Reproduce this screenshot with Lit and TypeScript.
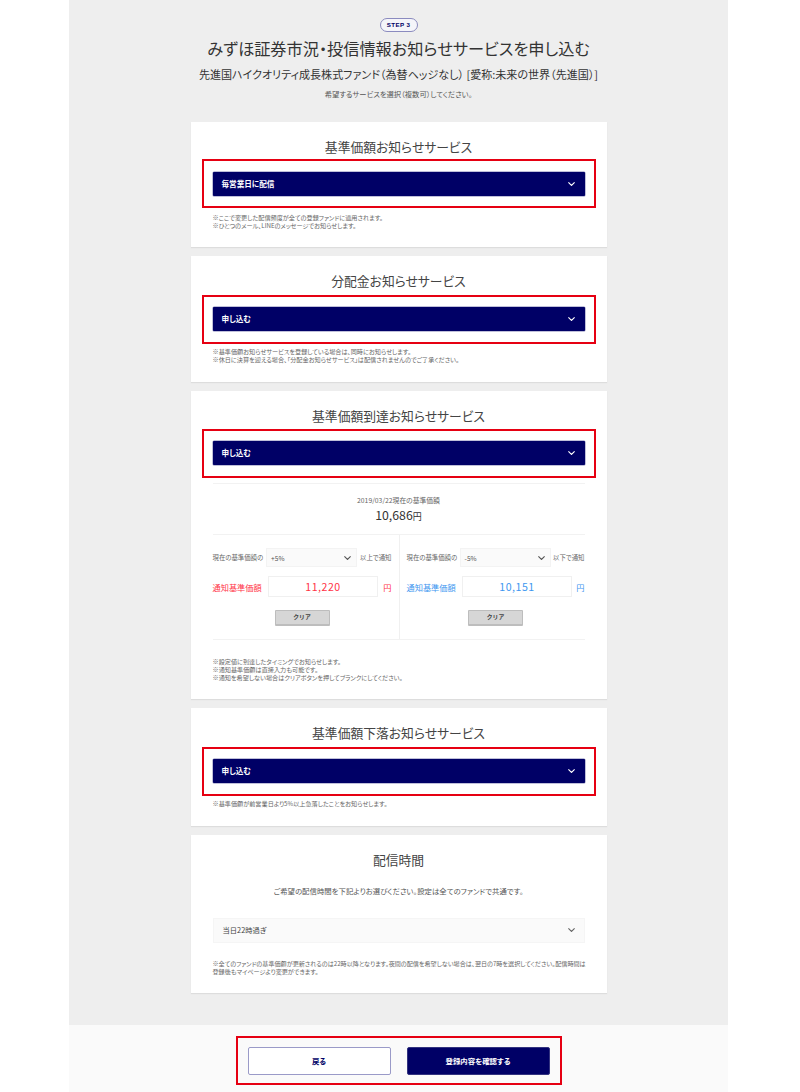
import { LitElement, html, css } from "lit";
import { customElement } from "lit/decorators.js";

const chev = () => html`<svg viewBox="0 0 7 4" width="7" height="4" fill="none" stroke="currentColor" stroke-width="1.15"><path d="M.4.4 3.5 3.4 6.6.4"/></svg>`;

@customElement("app-root")
export class AppRoot extends LitElement {
  static styles = css`
    :host { display: block; width: 800px; font-family: "Noto Sans CJK JP", "Noto Sans", sans-serif; color: #444; background: #fff; font-feature-settings: "palt"; }
    .page { width: 659px; margin-left: 69px; background: #eeeeee; height: 1092px; display: flex; flex-direction: column; }
    .main { flex: 1; display: flex; flex-direction: column; align-items: center; padding-top: 18px; }
    .step { width: 38px; height: 14px; box-sizing: border-box; border: 1px solid #8b8bbf; border-radius: 7px; background: #f5f5fa; color: #000066; font: 700 6.2px/12px "Liberation Sans", sans-serif; letter-spacing: .4px; text-align: center; }
    h1 { margin: 5px 0 0; font-size: 16.2px; line-height: 22px; font-weight: 400; color: #333; white-space: nowrap; }
    .sub { margin-top: 7px; font-size: 11.05px; line-height: 16px; color: #333; white-space: nowrap; }
    .lead { margin-top: 7px; font-size: 7.3px; line-height: 10px; color: #555; }
    .card { width: 416px; box-sizing: border-box; background: #fff; box-shadow: 0 1px 1px #ddd; padding: 15px 22px 0; margin-bottom: 9px; }
    .first { margin-top: 23px; }
    h2 { margin: 0; text-align: center; font-size: 12.8px; line-height: 19px; font-weight: 400; color: #444; }
    .red { margin: 5px -11px 0; border: 2px solid #e60012; padding: 10px 9px 11px; height: 49px; box-sizing: border-box; }
    .sel { height: 24px; box-sizing: border-box; border-radius: 1px; background: #000066; box-shadow: 0 0 0 .5px #8080b3; color: #fff; display: flex; align-items: center; justify-content: space-between; padding: 0 10px 1px 9px; font-size: 7.6px; font-weight: 700; }
    .note { font-size: 6.15px; line-height: 7.8px; color: #666; margin: 0; white-space: nowrap; }
    .c1 { height: 125px; }
    .c1 .red { margin-top: 3px; padding-top: 11px; padding-bottom: 10px; }
    .c1 .note { margin-top: 6px; }
    .c2 .note { margin-top: 4px; }
    .c2 { height: 126px; }
    .c3 { height: 308px; }
    .c3 .red { margin-top: 4px; }
    .c4 { height: 118px; }
    .c4 .note { margin-top: 4px; }
    .c5 { height: 158px; }
    .rule { border-top: 1px solid #f2f2f2; margin-top: 5px; }
    .cur { text-align: center; margin-top: 12px; font-size: 6.8px; line-height: 9px; height: 9px; color: #666; }
    .price { text-align: center; font-size: 12.3px; line-height: 18px; height: 18px; color: #333; margin-top: 1px; }
    .price small { font-size: 9px; }
    .alerts { display: grid; grid-template-columns: 1fr 1fr; border-top: 1px solid #f2f2f2; border-bottom: 1px solid #f2f2f2; margin-top: 10px; height: 106px; box-sizing: border-box; }
    .alert { padding-top: 13px; }
    .alert + .alert { border-left: 1px solid #f0f0f0; padding-left: 7px; }
    .alert:first-child { padding-right: 7px; }
    .r1 { display: flex; align-items: center; justify-content: space-between; font-size: 6.4px; color: #666; white-space: nowrap; }
    .mini { width: 91px; height: 19px; box-sizing: border-box; background: #fafafa; border: 1px solid #f3f3f3; display: flex; align-items: center; justify-content: space-between; padding: 0 5px 0 4px; color: #555; font-size: 6.6px; }
    .mini svg { color: #555; }
    .r2 { display: flex; align-items: center; margin-top: 9px; font-size: 8.2px; white-space: nowrap; }
    .lbl { width: 55.5px; }
    .yen { margin-left: auto; }
    .inp { width: 110px; height: 21px; box-sizing: border-box; border: 1px solid #f0f0f0; text-align: center; font-size: 10.6px; line-height: 19px; letter-spacing: .5px; }
    .up { color: #ff3346; }
    .down { color: #3d96f0; }
    .clr { display: block; width: 55px; height: 16px; margin: 13px auto 0; background: #d6d6d6; border: 1px solid #bdbdbd; border-bottom-width: 2px; border-radius: 1px; box-sizing: border-box; font: 700 5.8px/12px "Noto Sans CJK JP", sans-serif; color: #444; text-align: center; }
    .notes3 { margin-top: 18px; }
    .intro { text-align: center; font-size: 7.4px; line-height: 10px; color: #555; margin-top: 17px; }
    .plain { height: 25px; margin-top: 22px; background: #fafafa; border: 1px solid #f5f5f5; box-sizing: border-box; display: flex; align-items: center; justify-content: space-between; padding: 0 9px 1px; font-size: 7.3px; color: #444; }
    .plain svg { color: #666; }
    .c5 .note { margin-top: 17px; font-size: 6.1px; }
    .foot { height: 67px; background: #fafafa; display: flex; justify-content: center; }
    .fbox { width: 326px; height: 49px; margin-top: 11px; box-sizing: border-box; border: 2px solid #e60012; display: flex; justify-content: center; gap: 16px; padding-top: 9px; }
    .btn { width: 143px; height: 28px; box-sizing: border-box; border-radius: 2px; font-size: 7.4px; font-weight: 700; line-height: 26px; text-align: center; border: 1px solid #9a9ac8; }
    .back { background: #fff; color: #000066; }
    .go { background: #000066; color: #fff; border-color: #33337f; }
  `;

  private sel(label: string) {
    return html`<div class="red"><div class="sel"><span>${label}</span>${chev()}</div></div>`;
  }

  private alert(sel: string, tail: string, label: string, val: string, cls: string) {
    return html`<div class="alert">
      <div class="r1"><span>現在の基準価額の</span><div class="mini"><span>${sel}</span>${chev()}</div><span>${tail}</span></div>
      <div class="r2 ${cls}"><span class="lbl">${label}</span><div class="inp">${val}</div><span class="yen">円</span></div>
      <div class="clr">クリア</div>
    </div>`;
  }

  render() {
    return html`<div class="page">
      <div class="main">
        <div class="step">STEP 3</div>
        <h1>みずほ証券市況・投信情報お知らせサービスを申し込む</h1>
        <div class="sub">先進国ハイクオリティ成長株式ファンド（為替ヘッジなし） [愛称:未来の世界（先進国）]</div>
        <div class="lead">希望するサービスを選択（複数可）してください。</div>

        <section class="card c1 first">
          <h2>基準価額お知らせサービス</h2>
          ${this.sel("毎営業日に配信")}
          <p class="note">※ここで変更した配信頻度が全ての登録ファンドに適用されます。<br>※ひとつのメール、LINEのメッセージでお知らせします。</p>
        </section>

        <section class="card c2">
          <h2>分配金お知らせサービス</h2>
          ${this.sel("申し込む")}
          <p class="note">※基準価額お知らせサービスを登録している場合は、同時にお知らせします。<br>※休日に決算を迎える場合、「分配金お知らせサービス」は配信されませんのでご了承ください。</p>
        </section>

        <section class="card c3">
          <h2>基準価額到達お知らせサービス</h2>
          ${this.sel("申し込む")}
          <div class="rule"></div>
          <div class="cur">2019/03/22現在の基準価額</div>
          <div class="price">10,686<small>円</small></div>
          <div class="alerts">
            ${this.alert("+5%", "以上で通知", "通知基準価額", "11,220", "up")}
            ${this.alert("-5%", "以下で通知", "通知基準価額", "10,151", "down")}
          </div>
          <p class="note notes3">※設定値に到達したタイミングでお知らせします。<br>※通知基準価額は直接入力も可能です。<br>※通知を希望しない場合はクリアボタンを押してブランクにしてください。</p>
        </section>

        <section class="card c4">
          <h2>基準価額下落お知らせサービス</h2>
          ${this.sel("申し込む")}
          <p class="note">※基準価額が前営業日より5%以上急落したことをお知らせします。</p>
        </section>

        <section class="card c5">
          <h2>配信時間</h2>
          <div class="intro">ご希望の配信時間を下記よりお選びください。設定は全てのファンドで共通です。</div>
          <div class="plain"><span>当日22時過ぎ</span>${chev()}</div>
          <p class="note">※全てのファンドの基準価額が更新されるのは22時以降となります。夜間の配信を希望しない場合は、翌日の7時を選択してください。配信時間は<br>登録後もマイページより変更ができます。</p>
        </section>
      </div>
      <div class="foot">
        <div class="fbox">
          <div class="btn back">戻る</div>
          <div class="btn go">登録内容を確認する</div>
        </div>
      </div>
    </div>`;
  }
}
